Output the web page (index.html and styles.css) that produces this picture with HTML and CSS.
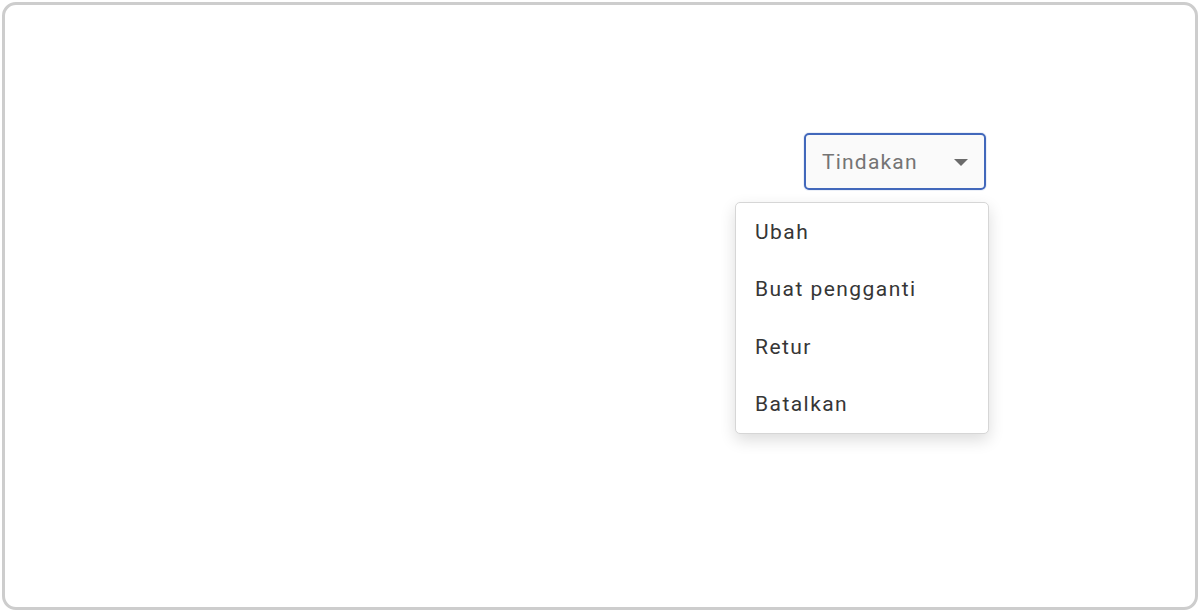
FILE: index.html
```html
<!DOCTYPE html>
<html lang="id">
<head>
<meta charset="utf-8">
<title>Tindakan</title>
<link rel="stylesheet" href="styles.css">
</head>
<body>
<div class="frame">
  <div class="dropdown">
    <button class="trigger" type="button">
      <span class="label">Tindakan</span>
      <svg class="caret" width="14" height="7" viewBox="0 0 14 7"><path d="M0 0 L14 0 L7 7 Z" fill="#6b6b6b"/></svg>
    </button>
    <ul class="menu">
      <li class="item">Ubah</li>
      <li class="item">Buat pengganti</li>
      <li class="item">Retur</li>
      <li class="item">Batalkan</li>
    </ul>
  </div>
</div>
</body>
</html>
```

FILE: styles.css
```css
* { box-sizing: border-box; }
html, body { margin: 0; padding: 0; background: #ffffff; }
body { font-family: Roboto, "Noto Sans", "Liberation Sans", sans-serif; }

.frame {
  margin: 2px;
  width: 1196px;
  height: 608px;
  border: 3px solid #cdcdcd;
  border-radius: 14px;
  background: #ffffff;
  display: flex;
  justify-content: flex-end;
  align-items: flex-start;
  padding: 128px 209px 0 0;
}

.dropdown {
  position: relative;
  display: flex;
  flex-direction: column;
  align-items: flex-end;
}

.trigger {
  width: 182px;
  height: 57px;
  display: flex;
  align-items: center;
  justify-content: space-between;
  padding: 0 16px 0 16px;
  background: #fafafa;
  border: 2px solid #4268bb;
  border-radius: 5px;
  box-shadow: 0 0 0 1px rgba(66, 104, 187, 0.10);
  font-family: inherit;
  font-size: 21px;
  color: #747474;
  letter-spacing: 1.2px;
  cursor: pointer;
}

.caret { display: block; margin-top: 1px; }

.menu {
  position: absolute;
  top: 69px;
  right: -3px;
  width: 254px;
  margin: 0;
  padding: 0;
  list-style: none;
  background: #ffffff;
  border: 1px solid #d6d6d6;
  border-radius: 5px;
  box-shadow: 0 6px 16px rgba(0, 0, 0, 0.14);
}

.item {
  height: 57.5px;
  display: flex;
  align-items: center;
  padding-left: 19px;
  font-size: 21px;
  color: #363636;
  letter-spacing: 1.45px;
}
```
